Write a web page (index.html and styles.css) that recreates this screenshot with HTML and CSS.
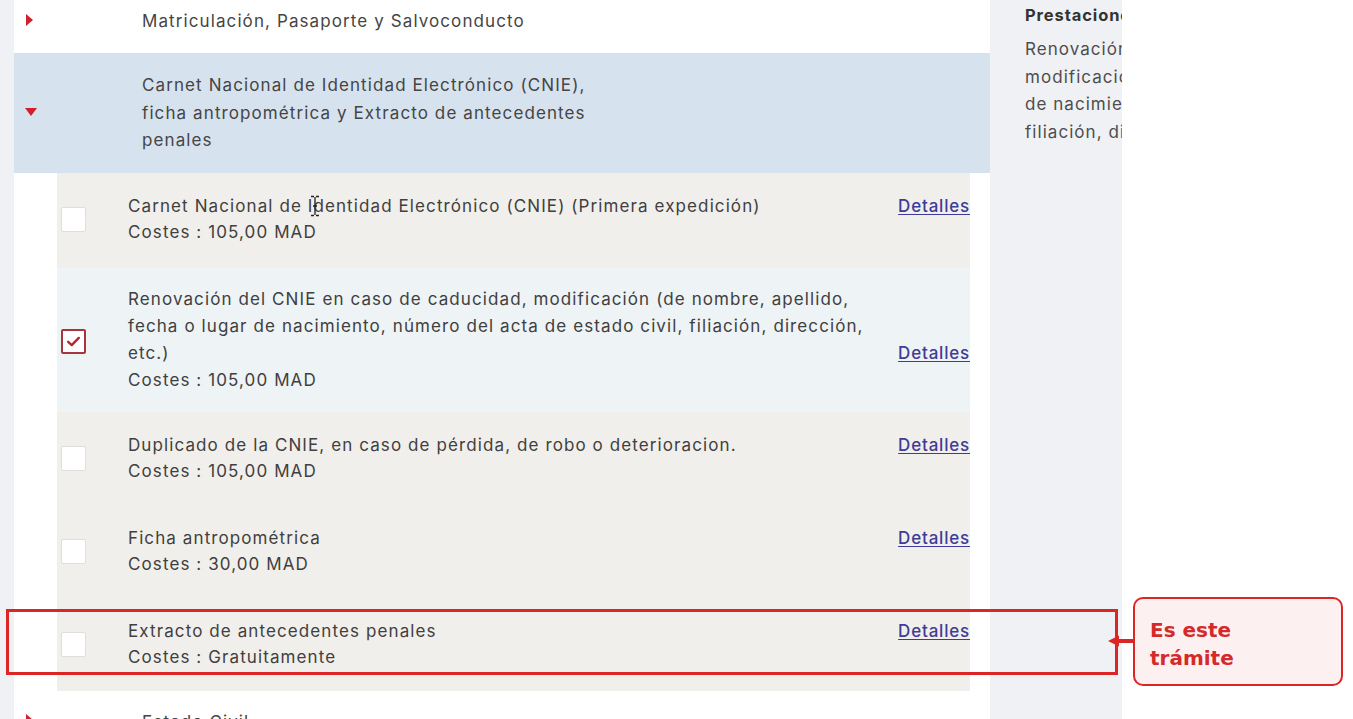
FILE: index.html
```html
<!DOCTYPE html>
<html lang="es">
<head>
<meta charset="utf-8">
<title>Trámites</title>
<link rel="stylesheet" href="styles.css">
</head>
<body>
<div class="stage">
  <div class="gutter"></div>
  <main class="panel">
    <div class="cat">
      <span class="caret caret-right"></span>
      <span class="cat-title">Matriculación, Pasaporte y Salvoconducto</span>
    </div>
    <div class="cat cat-open">
      <span class="caret caret-down"></span>
      <span class="cat-title">Carnet Nacional de Identidad Electrónico (CNIE),<br>ficha antropométrica y Extracto de antecedentes<br>penales</span>
    </div>
    <div class="subs">
      <div class="item item-a">
        <span class="check"></span>
        <div class="item-body">
          <div class="item-head">
            <span class="item-title">Carnet Nacional de Identidad Electrónico (CNIE) (Primera expedición)</span>
            <a class="details" href="#">Detalles</a>
          </div>
          <div class="cost">Costes : 105,00 MAD</div>
        </div>
      </div>
      <div class="item item-b">
        <span class="check checked"><svg viewBox="0 0 24 24" width="17" height="17"><path d="M4.5 12.5 L9.5 17 L19.5 7" fill="none" stroke="#b8232f" stroke-width="3.4" stroke-linecap="round" stroke-linejoin="round"/></svg></span>
        <div class="item-body">
          <div class="item-head">
            <span class="item-title">Renovación del CNIE en caso de caducidad, modificación (de nombre, apellido,<br>fecha o lugar de nacimiento, número del acta de estado civil, filiación, dirección,<br>etc.)</span>
            <a class="details" href="#">Detalles</a>
          </div>
          <div class="cost">Costes : 105,00 MAD</div>
        </div>
      </div>
      <div class="item item-a">
        <span class="check"></span>
        <div class="item-body">
          <div class="item-head">
            <span class="item-title">Duplicado de la CNIE, en caso de pérdida, de robo o deterioracion.</span>
            <a class="details" href="#">Detalles</a>
          </div>
          <div class="cost">Costes : 105,00 MAD</div>
        </div>
      </div>
      <div class="item item-a">
        <span class="check"></span>
        <div class="item-body">
          <div class="item-head">
            <span class="item-title">Ficha antropométrica</span>
            <a class="details" href="#">Detalles</a>
          </div>
          <div class="cost">Costes : 30,00 MAD</div>
        </div>
      </div>
      <div class="item item-a">
        <span class="check"></span>
        <div class="item-body">
          <div class="item-head">
            <span class="item-title">Extracto de antecedentes penales</span>
            <a class="details" href="#">Detalles</a>
          </div>
          <div class="cost">Costes : Gratuitamente</div>
        </div>
      </div>
    </div>
    <div class="cat">
      <span class="caret caret-right"></span>
      <span class="cat-title">Estado Civil</span>
    </div>
  </main>
  <aside class="side">
    <h3 class="side-title">Prestaciones seleccionadas</h3>
    <p class="side-text"><span>Renovación del CNIE en caso de caducidad,</span><span>modificación (de nombre, apellido, fecha o lugar</span><span>de nacimiento, número del acta de estado civil,</span><span>filiación, dirección, etc.)</span></p>
  </aside>
</div>

<svg class="ibeam" viewBox="0 0 10 22" width="10" height="22"><path d="M1 1.5 H4 M6 1.5 H9 M5 2 V20 M1 20.5 H4 M6 20.5 H9 M3 11 H7" fill="none" stroke="#222" stroke-width="1.3"/></svg>

<div class="mark-box"></div>
<svg class="mark-arrow" viewBox="0 0 28 16" width="28" height="16"><path d="M10 8 H28" stroke="#dc2626" stroke-width="4"/><polygon points="2,8 13,2.5 13,13.5" fill="#dc2626"/></svg>
<div class="callout">Es este<br>trámite</div>
</body>
</html>
```

FILE: styles.css
```css
* { box-sizing: border-box; }

html, body {
  margin: 0;
  padding: 0;
  height: 719px;
  overflow: hidden;
  background: #ffffff;
}

body {
  font-family: Inter, "Open Sans", "Liberation Sans", sans-serif;
  color: #3f3f3f;
  position: relative;
}

.stage {
  width: 1122px;
  height: 719px;
  display: flex;
  background: #eff1f5;
  overflow: hidden;
}

.gutter { width: 14px; flex: none; }

.panel {
  width: 976px;
  flex: none;
  background: #ffffff;
  display: flex;
  flex-direction: column;
}

.cat {
  display: flex;
  align-items: center;
  padding: 8px 0 17px 0;
  font-size: 17px;
  letter-spacing: 1.1px;
  line-height: 27px;
  color: #454545;
}

.cat-open {
  background: #d6e2ee;
  padding: 19px 0 18px 0;
  line-height: 27.5px;
  margin-top: 1px;
}

.caret {
  width: 128px;
  flex: none;
  position: relative;
  height: 14px;
}

.caret::before {
  content: "";
  position: absolute;
  width: 0;
  height: 0;
}

.caret-right::before {
  left: 12px;
  top: -1px;
  border-left: 7px solid #d11f2b;
  border-top: 6.5px solid transparent;
  border-bottom: 6.5px solid transparent;
}

.caret-down::before {
  left: 11px;
  top: 2px;
  border-top: 8px solid #d11f2b;
  border-left: 6px solid transparent;
  border-right: 6px solid transparent;
}

.subs {
  margin: 0 20px 10px 43px;
  display: flex;
  flex-direction: column;
}

.item {
  display: flex;
  align-items: center;
  padding: 20px 0 20px 4px;
  font-size: 17px;
  letter-spacing: 1.1px;
  line-height: 26.5px;
  color: #404040;
}

.item:first-child { padding-bottom: 22px; }

.item-a { background: #f1efeb; }
.item-b { background: #eef3f6; padding: 18px 0 18px 4px; line-height: 27px; }

.check {
  width: 25px;
  height: 25px;
  flex: none;
  background: #ffffff;
  border: 1px solid #dedede;
  border-radius: 2px;
  margin-right: 42px;
  display: flex;
  align-items: center;
  justify-content: center;
}

.check.checked {
  border: 2px solid #a8343c;
  margin-top: 3px;
}

.item-body { flex: 1; min-width: 0; }

.item-head {
  display: flex;
  justify-content: space-between;
  align-items: last baseline;
  gap: 12px;
}

.item-title { white-space: nowrap; }

.details {
  color: #3e3c98;
  text-decoration: underline;
  text-underline-offset: 2px;
  font-weight: 500;
  letter-spacing: 0.8px;
  flex: none;
}

.side {
  flex: none;
  width: 132px;
  padding: 3px 0 0 35px;
  overflow: hidden;
}

.side-title {
  margin: 0;
  font-size: 16.5px;
  font-weight: 700;
  letter-spacing: 0.9px;
  line-height: 24px;
  color: #333333;
  white-space: nowrap;
}

.side-text {
  margin: 9px 0 0 0;
  font-size: 17px;
  letter-spacing: 1.05px;
  line-height: 27.5px;
  color: #4d4d4d;
  white-space: nowrap;
}

.side-text span { display: block; }

.ibeam {
  position: absolute;
  left: 310px;
  top: 195px;
}

.mark-box {
  position: absolute;
  left: 6px;
  top: 609px;
  width: 1112px;
  height: 66px;
  border: 3px solid #dc2626;
}

.mark-arrow {
  position: absolute;
  left: 1106px;
  top: 633px;
}

.callout {
  position: absolute;
  left: 1133px;
  top: 597px;
  width: 210px;
  height: 89px;
  border: 2px solid #dc2626;
  border-radius: 10px;
  background: #fdf0f0;
  padding: 17px 0 0 15px;
  font-family: "DejaVu Sans", sans-serif;
  font-weight: 700;
  font-size: 20px;
  line-height: 28px;
  color: #d42a2a;
}
```
